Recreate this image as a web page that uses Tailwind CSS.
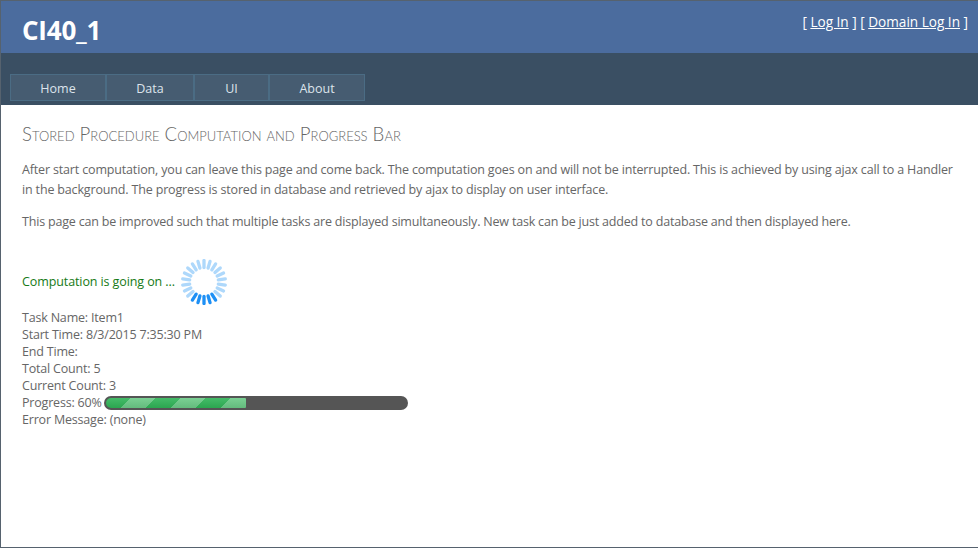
<!DOCTYPE html>
<html lang="en">
<head>
  <meta charset="UTF-8" />
  <title>CI40_1</title>
  <script src="https://cdn.jsdelivr.net/npm/@tailwindcss/browser@4"></script>
</head>
<body class="bg-white">
<div class="h-[548px] overflow-hidden border-t border-b border-l border-[#56626e] font-['Open_Sans',sans-serif] text-[12.5px] tracking-[-0.19px] text-[#666666]">

  <header class="h-[52px] bg-[#4b6c9e] flex justify-between">
    <h1 class="pl-[21px] pt-[11px] text-[26px] leading-[36px] font-bold tracking-[-0.2px] text-white">CI40_1</h1>
    <div class="pr-[10px] pt-[12px] text-[13.6px] leading-[18px] tracking-normal text-white">
      [ <a href="#" class="underline">Log In</a> ] [ <a href="#" class="underline">Domain Log In</a> ]
    </div>
  </header>

  <nav class="h-[52px] bg-[#3a4f63] pl-[9px] pt-[21px]">
    <ul class="flex w-fit h-[27px] border border-[#4b6c84] bg-[#465c71] text-[#dde4ec] text-[12.5px] leading-[27px] tracking-normal text-center">
      <li class="w-[96px] border-r-2 border-[#4b6c84]">Home</li>
      <li class="w-[88px] border-r-2 border-[#4b6c84]">Data</li>
      <li class="w-[75px] border-r-2 border-[#4b6c84]">UI</li>
      <li class="w-[94px]">About</li>
    </ul>
  </nav>

  <main class="pl-[21px] pt-[16px]">
    <h2 class="text-[18.6px] leading-[26px] tracking-normal font-['Lato',sans-serif] font-light [font-variant:small-caps] text-[#666666]">Stored Procedure Computation and Progress Bar</h2>
    <p class="mt-[13px] w-[938px] leading-[20px] tracking-[-0.16px]">After start computation, you can leave this page and come back. The computation goes on and will not be interrupted. This is achieved by using ajax call to a Handler in the background. The progress is stored in database and retrieved by ajax to display on user interface.</p>
    <p class="mt-[12px] leading-[20px]">This page can be improved such that multiple tasks are displayed simultaneously. New task can be just added to database and then displayed here.</p>

    <div class="mt-[26px] h-[48px] flex items-center gap-[6px] tracking-[-0.1px] text-[#167a16]">
      <span>Computation is going on ...</span>
      <svg id="spinner" width="46" height="46" viewBox="-23 -23 46 46" fill="none"></svg>
    </div>

    <div class="mt-[3px] leading-[17px]">
      <div>Task Name: Item1</div>
      <div>Start Time: 8/3/2015 7:35:30 PM</div>
      <div>End Time:</div>
      <div>Total Count: 5</div>
      <div>Current Count: 3</div>
      <div class="flex items-center gap-[2px]">
        <span>Progress: 60%</span>
        <div class="w-[304px] h-[14px] rounded-[7px] bg-[#555555] p-[2px]">
          <div class="w-[140px] h-[10px] rounded-l-[5px] rounded-r-[1px] bg-[linear-gradient(to_bottom,rgba(255,255,255,0.1),rgba(0,0,0,0.08)),repeating-linear-gradient(-45deg,#6ccb88_0,#6ccb88_17.7px,#2fb457_17.7px,#2fb457_35.4px)]"></div>
        </div>
      </div>
      <div>Error Message: (none)</div>
    </div>
  </main>
</div>

<script>
  // spokes of the loading ring, the darker ones sit at the bottom
  const spinner = document.getElementById("spinner");
  const spokes = 22;
  for (let i = 0; i < spokes; i++) {
    const angle = (i * 360) / spokes;
    const dark = angle > 140 && angle < 215;
    const line = document.createElementNS("http://www.w3.org/2000/svg", "line");
    line.setAttribute("x1", 0);
    line.setAttribute("y1", -14.5);
    line.setAttribute("x2", 0);
    line.setAttribute("y2", -21.5);
    line.setAttribute("stroke", dark ? "#1e90f5" : "#aed8fb");
    line.setAttribute("stroke-width", 3.3);
    line.setAttribute("stroke-linecap", "round");
    line.setAttribute("transform", `rotate(${angle})`);
    spinner.appendChild(line);
  }
</script>
</body>
</html>
